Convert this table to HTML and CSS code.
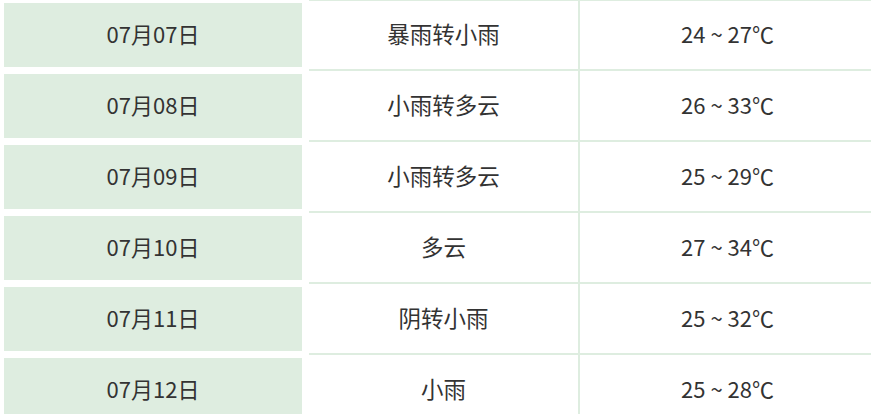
FILE: index.html
```html
<!DOCTYPE html>
<html lang="zh-CN">
<head>
<meta charset="utf-8">
<title>天气预报</title>
<link rel="stylesheet" href="styles.css">
</head>
<body>
<div class="table">
  <div class="row"><div class="date">07月07日</div><div class="cell weather">暴雨转小雨</div><div class="cell temp">24 ~ 27℃</div></div>
  <div class="row"><div class="date">07月08日</div><div class="cell weather">小雨转多云</div><div class="cell temp">26 ~ 33℃</div></div>
  <div class="row"><div class="date">07月09日</div><div class="cell weather">小雨转多云</div><div class="cell temp">25 ~ 29℃</div></div>
  <div class="row"><div class="date">07月10日</div><div class="cell weather">多云</div><div class="cell temp">27 ~ 34℃</div></div>
  <div class="row"><div class="date">07月11日</div><div class="cell weather">阴转小雨</div><div class="cell temp">25 ~ 32℃</div></div>
  <div class="row"><div class="date">07月12日</div><div class="cell weather">小雨</div><div class="cell temp">25 ~ 28℃</div></div>
</div>
</body>
</html>
```
FILE: styles.css
```css
html, body {
  margin: 0;
  padding: 0;
  background: #ffffff;
  overflow: hidden;
}
body {
  font-family: "Noto Sans CJK SC", "Noto Sans", sans-serif;
  font-size: 22px;
  color: #333333;
}
.table {
  display: flex;
  flex-direction: column;
  width: 880px;
}
.row {
  display: flex;
  height: 71px;
}
.row:first-child {
  height: 69px;
}
.date {
  width: 298px;
  margin: 5px 7px 2px 4px;
  padding-bottom: 4px;
  box-sizing: border-box;
  background: #deede0;
  display: flex;
  align-items: center;
  justify-content: center;
}
.row:first-child .date {
  margin-top: 3px;
}
.cell {
  border-top: 2px solid #deede0;
  padding-bottom: 4px;
  box-sizing: border-box;
  display: flex;
  align-items: center;
  justify-content: center;
}
.row:first-child .cell {
  border-top-width: 1px;
}
.weather {
  width: 271px;
  font-size: 22.5px;
  border-right: 2px solid #deede0;
}
.temp {
  width: 295px;
}
```
